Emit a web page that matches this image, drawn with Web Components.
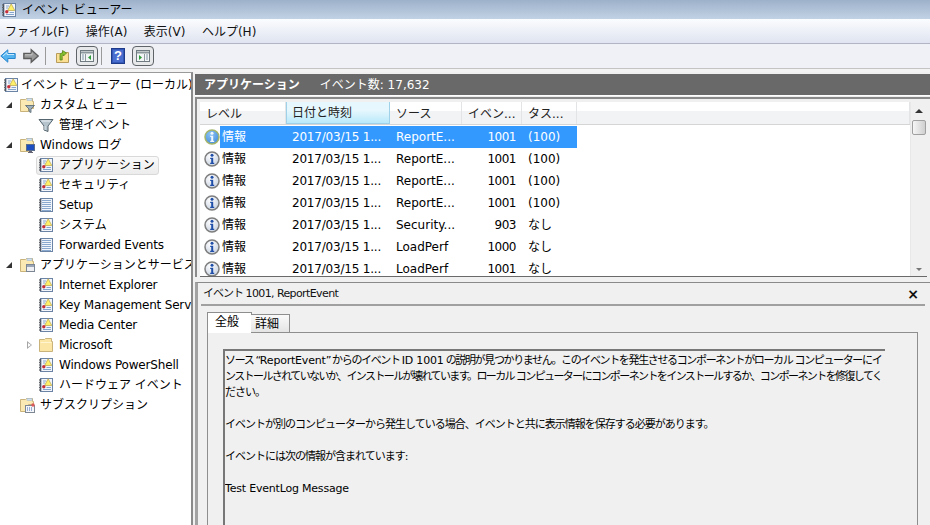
<!DOCTYPE html>
<html lang="ja">
<head>
<meta charset="utf-8">
<title>イベント ビューアー</title>
<style>
html, body { margin: 0; height: 100%; overflow: hidden; }
body { font: 12px/16px "DejaVu Sans", "Noto Sans CJK JP", sans-serif; color: #000; background: #f0f0f0; }
viewer-app { width: 930px; height: 525px; }
</style>
</head>
<body>
<viewer-app></viewer-app>
<script>
const BOOK = `<rect x="2.5" y="1.5" width="12" height="13" fill="#f2f6fb" stroke="#6b84a6"/><path d="M2.5 2v12" stroke="#3f4f66" stroke-width="1.6"/><path d="M1 3h2M1 5.5h2M1 8h2M1 10.5h2M1 13h2" stroke="#666"/>`
const TAB = `<rect x="8" y="1.5" width="5" height="2" fill="#cfe0f2" stroke="#9db4cc" stroke-width=".5"/>`
const ICONS = {
  log: `${BOOK}<path d="M5 4h3M5 6h2M5 12.5h8M8.5 10.5h4.5" stroke="#86a5cc"/><path d="M10.2 1.8l3.6 6.7H6.6z" fill="#fff06a" stroke="#b7a04a" stroke-width=".7"/><circle cx="5.8" cy="9.8" r="1.7" fill="#c62f3c"/>`,
  plain: `${BOOK}<path d="M4 3.5h9M4 5.5h9M4 7.5h9M4 9.5h9M4 11.5h9M4 13.5h9" stroke="#8aa9cf"/>`,
  folder: `<path d="M1.5 14.5v-12h5l1-1h6v3h1v10z" fill="#fbe6a6" stroke="#c9b37a"/><path d="M2.5 5.5h11" stroke="#fff5d0"/>`,
  folderFilter: `<path d="M1.5 14.5v-12h5l1-1h6v3h1v7h-5v3z" fill="#fbe9b4" stroke="#c9b37a"/>${TAB}<path d="M6.5 8.5h9l-3.5 3.5v3.5l-2-1v-2.5z" fill="#9fb0bd" stroke="#54646f" stroke-width=".8"/>`,
  folderWin: `<path d="M1.5 14.5v-12h5l1-1h6v3h1v3h-5v7z" fill="#fbe9b4" stroke="#c9b37a"/>${TAB}<rect x="7.5" y="7.5" width="8" height="6" fill="#1d4fc0" stroke="#5a6e8c"/><path d="M10 14.5h3M9 15.5h5" stroke="#667"/>`,
  folderApp: `<path d="M1.5 14.5v-12h5l1-1h6v3h1v3h-5v7z" fill="#fbe9b4" stroke="#c9b37a"/>${TAB}<rect x="7.5" y="7.5" width="8" height="7" fill="#eef0f3" stroke="#7d8794"/><path d="M8 9h7" stroke="#9aa6b5" stroke-width="2"/>`,
  folderSub: `<path d="M1.5 14.5v-12h5l1-1h6v3h1v3h-5v7z" fill="#fbe9b4" stroke="#c9b37a"/>${TAB}<rect x="6.5" y="8.5" width="9" height="7" fill="#f4f6fa" stroke="#7d8794"/><path d="M8 11h1M10 11h1M12 11h1M8 13h1M10 13h1M12 13h1" stroke="#3d66b0"/><circle cx="14" cy="8" r="1.7" fill="#dc5a5a"/>`,
  filter: `<path d="M1 2.5h14L10 9v5.5l-4-1.5V9z" fill="#b5c3cc" stroke="#55656f"/><path d="M3.5 4h9" stroke="#eef3f6"/><path d="M7 9v4" stroke="#dfe6ea"/>`,
  back: `<path d="M.8 8l7-6.2v3.7h7.4v5H7.8v3.7z" fill="#55b4f0" stroke="#2a86cc"/><path d="M3 8l4-3.5v2h7" stroke="#c8e9fc" fill="none"/>`,
  forward: `<path d="M15.2 8L8.2 1.8v3.7H.8v5h7.4v3.7z" fill="#9a9a9a" stroke="#5c5c5c" stroke-width="1.3"/><path d="M2 6.8h7v-2" stroke="#c9c9c9" fill="none"/>`,
  up: `<path d="M1.5 14.5v-9h5l1-1h6v10z" fill="#fbdf93" stroke="#b79c5c"/><path d="M5 12V7.5C5 5.5 6 5 7.5 5V2.500L11.5 5 8.5 8V6.800C7.5 6.800 7.200 7.500 7.200 8.500V12z" fill="#86c12f" stroke="#4d7a14" stroke-width=".7"/>`,
  help: `<rect x=".5" y=".5" width="13" height="15" fill="#3458b8" stroke="#1e3a8a"/><rect x="2" y="2" width="10" height="12" fill="#4a6ed0"/>`,
  paneLeft: `<rect x="1.5" y="2.5" width="13" height="11" fill="#f2f5f5" stroke="#6f7b80"/><path d="M2 4.5h12" stroke="#8c989d" stroke-width="2"/><path d="M6.5 6v7" stroke="#8c989d"/><path d="M3 7h2M3 9h2M3 11h2" stroke="#7f93a8"/><path d="M12 7v5l-3-2.5z" fill="#2e9b3a"/>`,
  paneRight: `<rect x="1.5" y="2.5" width="13" height="11" fill="#f2f5f5" stroke="#6f7b80"/><path d="M2 4.5h12" stroke="#8c989d" stroke-width="2"/><path d="M9.5 6v7" stroke="#8c989d"/><path d="M11 7h2M11 9h2M11 11h2" stroke="#7f93a8"/><path d="M4 7v5l3-2.5z" fill="#2e9b3a"/>`
}

class AppIcon extends HTMLElement {
  connectedCallback() {
    const size = this.getAttribute('size') || 16
    this.attachShadow({ mode: 'open' }).innerHTML = `
      <style>
        :host { display: block; width: ${size}px; height: ${size}px; flex: none; }
        svg { display: block; }
      </style>
      <svg width="${size}" height="${size}" viewBox="0 0 16 16">${ICONS[this.getAttribute('name')]}</svg>`
  }
}

class TitleBar extends HTMLElement {
  connectedCallback() {
    this.attachShadow({ mode: 'open' }).innerHTML = `
      <style>
        :host { display: flex; align-items: center; gap: 5px; height: 19px; padding-left: 1px;
          background: linear-gradient(#9db1ca, #c2d2e5); }
      </style>
      <app-icon name="log"></app-icon><span><slot></slot></span>`
  }
}

class MenuBar extends HTMLElement {
  connectedCallback() {
    this.attachShadow({ mode: 'open' }).innerHTML = `
      <style>
        :host { display: flex; align-items: center; gap: 16.5px; height: 25px; padding: 1px 0 0 5px; box-sizing: border-box;
          background: linear-gradient(#fbfcfe, #dfe4f0); border-bottom: 1px solid #b2b5c6; color: #111; }
      </style>
      <slot></slot>`
  }
}

class ToolBar extends HTMLElement {
  connectedCallback() {
    this.attachShadow({ mode: 'open' }).innerHTML = `
      <style>
        :host { display: flex; align-items: center; height: 24px; background: #f0f1f6; }
        .sep { width: 1px; height: 18px; background: #9a9a9a; }
        .btn { box-sizing: border-box; width: 22px; height: 20px; display: flex; align-items: center;
          justify-content: center; border: 1.5px solid #5f6468; border-radius: 4px; background: #e6e8ea; }
        .q { position: relative; width: 14px; height: 16px; }
        .q b { position: absolute; inset: 0; text-align: center; color: #fff; font: bold 13px/16px "Liberation Sans", sans-serif; }
      </style>
      <app-icon name="back" style="margin-left:0"></app-icon>
      <app-icon name="forward" style="margin-left:7px"></app-icon>
      <div class="sep" style="margin-left:6px"></div>
      <app-icon name="up" style="margin-left:9px"></app-icon>
      <div class="btn" style="margin-left:5px"><app-icon name="paneLeft"></app-icon></div>
      <div class="sep" style="margin-left:3px"></div>
      <div class="q" style="margin-left:9px"><app-icon name="help"></app-icon><b>?</b></div>
      <div class="btn" style="margin-left:7px"><app-icon name="paneRight"></app-icon></div>`
  }
}

class TreeItem extends HTMLElement {
  connectedCallback() {
    const level = +this.getAttribute('level') || 0
    const arrow = this.getAttribute('arrow')
    const sel = this.hasAttribute('selected')
    const left = [3, 19, 38][level]
    this.attachShadow({ mode: 'open' }).innerHTML = `
      <style>
        :host { display: flex; align-items: center; height: 20px; padding-left: ${left}px; position: relative; white-space: nowrap; }
        .label { margin-left: ${level === 0 ? 2 : 5}px; ${this.hasAttribute('latin') ? 'letter-spacing: -.18px;' : ''} }
        .sel { position: absolute; left: 36px; top: 1px; width: 121px; height: 17px; border: 1px solid #d9d9d9;
          border-radius: 3px; background: linear-gradient(#fafafa, #ececec); }
        app-icon, .label { position: relative; }
        .arrow { position: absolute; top: 7px; }
        .open { left: 6px; width: 0; height: 0; border-style: solid; border-width: 0 0 6px 6px; border-color: transparent transparent #333 transparent; }
        .closed { left: 27px; top: 6px; width: 0; height: 0; border-style: solid; border-width: 4px 0 4px 5px; border-color: transparent transparent transparent #a6a6a6; }
        .closed::after { content: ""; position: absolute; left: -4px; top: -2px; border-style: solid; border-width: 2px 0 2px 3px; border-color: transparent transparent transparent #fff; }
      </style>
      ${sel ? '<div class="sel"></div>' : ''}
      ${arrow ? `<div class="arrow ${arrow}"></div>` : ''}
      <app-icon name="${this.getAttribute('icon')}"></app-icon>
      <span class="label"><slot></slot></span>`
  }
}

class TreePane extends HTMLElement {
  connectedCallback() {
    this.attachShadow({ mode: 'open' }).innerHTML = `
      <style>
        :host { display: block; box-sizing: border-box; width: 193px; flex: none; background: #fff; overflow: hidden;
          border-top: 1px solid #9a9a9a; border-right: 2px solid #8a8a8a; padding-top: 2px; }
      </style>
      <slot></slot>`
  }
}

class EventRow extends HTMLElement {
  connectedCallback() {
    const sel = this.hasAttribute('selected')
    const a = n => this.getAttribute(n)
    const gid = sel ? 'gs' : 'gn'
    this.attachShadow({ mode: 'open' }).innerHTML = `
      <style>
        :host { display: grid; grid-template-columns: 86px 104px 72px 60px 55px; height: 22px; line-height: 22px;
          white-space: nowrap; position: relative; }
        .c { padding-left: 6px; }
        .date { letter-spacing: -.2px; }
        .id { text-align: right; padding-right: 6px; letter-spacing: -.5px; }
        .hl { position: absolute; left: 20px; top: 0; width: 357px; height: 22px; background: #3399ff; }
        .c, .id { position: relative; ${sel ? 'color: #fff;' : ''} }
        svg { position: absolute; left: 4px; top: 3px; }
      </style>
      ${sel ? '<div class="hl"></div>' : ''}
      <div class="c" style="padding-left:22px">
        <svg width="16" height="16" viewBox="0 0 16 16">
          <defs><radialGradient id="${gid}" cx=".4" cy=".3" r=".8">
            <stop offset="0" stop-color="${sel ? '#8cc4f4' : '#ffffff'}"/><stop offset="1" stop-color="${sel ? '#3f88da' : '#c3cede'}"/>
          </radialGradient></defs>
          <circle cx="8" cy="8" r="7" fill="url(#${gid})" stroke="${sel ? '#a3b56a' : '#7e7e7e'}" stroke-width="1.5"/>
          <circle cx="8" cy="4.3" r="1.5" fill="${sel ? '#f0f7ff' : '#1f4ea8'}"/>
          <path d="M6.2 6.8h3v5h1V13H6.2v-1.2h1V8H6.2z" fill="${sel ? '#f0f7ff' : '#1f4ea8'}"/>
        </svg>情報</div>
      <div class="c date">${a('date')}</div>
      <div class="c">${a('source')}</div>
      <div class="id">${a('eid')}</div>
      <div class="c">${a('task')}</div>`
  }
}

class EventTable extends HTMLElement {
  connectedCallback() {
    this.attachShadow({ mode: 'open' }).innerHTML = `
      <style>
        :host { display: flex; height: 174px; margin: 3px 3px 0 3px; background: #fff; overflow: hidden;
          border-bottom: 1px solid #6a6a6a; }
        .list { flex: 1; min-width: 0; overflow: hidden; }
        .head { display: grid; grid-template-columns: 86px 104px 72px 60px 55px 1fr; height: 23px; margin-bottom: 1px;
          background: linear-gradient(#fff 0 40%, #f2f3f5 40% 100%); border-bottom: 1px solid #d5d5d5; box-sizing: border-box; }
        .head div { padding-left: 6px; line-height: 24px; color: #222; border-right: 1px solid #e3e4e6; white-space: nowrap; overflow: hidden; }
        .head .sort { background: linear-gradient(#e6f7fd 0 40%, #b9e9fa 100%); border: 1px solid #9fd2e8; border-top: 0; box-sizing: border-box; line-height: 23px; padding-left: 5px; }
        .scroll { width: 16px; flex: none; background: #f0f0f0; position: relative; display: flex; flex-direction: column; align-items: center; border-left: 1px solid #e8e8e8; }
        .up { margin-top: 7px; border-style: solid; border-width: 0 4px 4px; border-color: transparent transparent #333; }
        .thumb { box-sizing: border-box; width: 14px; height: 15px; margin-top: 7px; border: 1px solid #a0a0a0; border-radius: 2px;
          background: linear-gradient(90deg, #f6f6f6, #cfcfcf); }
        .down { margin-top: auto; margin-bottom: 5px; border-style: solid; border-width: 3px 3px 0; border-color: #777 transparent transparent; }
      </style>
      <div class="list">
        <div class="head">
          <div>レベル</div><div class="sort">日付と時刻</div><div>ソース</div><div>イベン...</div><div>タス...</div><div></div>
        </div>
        <slot></slot>
      </div>
      <div class="scroll"><div class="up"></div><div class="thumb"></div><div class="down"></div></div>`
  }
}

class DetailPane extends HTMLElement {
  connectedCallback() {
    this.attachShadow({ mode: 'open' }).innerHTML = `
      <style>
        :host { display: block; flex: 1; min-height: 0; margin: 5px 0 0 0; background: #f0f0f0; border-top: 1px solid #8a8a8a;
          border-left: 3px solid #a2a2a2; overflow: hidden; }
        .top { display: flex; justify-content: space-between; align-items: center; height: 21px; margin-left: 5px; width: 721px; color: #111;
          font-size: 11px; letter-spacing: -1px; }
        .x { font: bold 14px/16px "DejaVu Sans", sans-serif; margin-right: 5px; letter-spacing: 0; }
        .rule { height: 2px; margin-left: 3px; width: 724px; background: #a0a0a0; }
        .tabs { display: flex; align-items: flex-end; margin: 6px 0 0 9px; height: 20px; position: relative; z-index: 1; }
        .tab { box-sizing: border-box; border: 1px solid #8e8e8e; border-bottom: 0; }
        .on { width: 45px; height: 21px; background: #fff; line-height: 18px; margin-bottom: -1px; padding-left: 7px; }
        .off { width: 39px; height: 18px; margin-left: -1px; border-left: 0; background: linear-gradient(#fafafa, #e4e4e4); line-height: 18px; padding-left: 4px; }
        .panel { margin-left: 9px; width: 711px; box-sizing: border-box; height: 240px; border: 1px solid #8e8e8e; border-bottom: 0; padding: 16px 32px 0 15px; }
        .msg { height: 200px; border-top: 2px solid #777; border-left: 2px solid #777; padding: 2px 0 0 0; white-space: nowrap; overflow: hidden;
          line-height: 16px; font-size: 11px; letter-spacing: -1px; }
      </style>
      <div class="top"><span><slot name="title"></slot></span><span class="x">×</span></div>
      <div class="rule"></div>
      <div class="tabs"><div class="tab on">全般</div><div class="tab off">詳細</div></div>
      <div class="panel"><div class="msg"><slot></slot></div></div>`
  }
}

class ViewerApp extends HTMLElement {
  connectedCallback() {
    const rows = [
      ['ReportE...', '1001', '(100)'], ['ReportE...', '1001', '(100)'], ['ReportE...', '1001', '(100)'],
      ['ReportE...', '1001', '(100)'], ['Security...', '903', 'なし'], ['LoadPerf', '1000', 'なし'], ['LoadPerf', '1001', 'なし']
    ].map((r, i) => `<event-row ${i === 0 ? 'selected' : ''} date="2017/03/15 1..." source="${r[0]}" eid="${r[1]}" task="${r[2]}"></event-row>`).join('')

    this.attachShadow({ mode: 'open' }).innerHTML = `
      <style>
        :host { display: flex; flex-direction: column; overflow: hidden; background: #f0f0f0; }
        .spacer { height: 4px; flex: none; background: #f3f3f3; border-top: 1px solid #c4c4c4; box-sizing: border-box; }
        .main { flex: 1; min-height: 0; display: flex; }
        .right { flex: 1; min-width: 0; display: flex; flex-direction: column; margin-left: 2px; }
        .band { height: 21px; margin-top: 2px; flex: none; background: #696969; color: #fff; display: flex; align-items: center; gap: 20px; padding-left: 9px; border-bottom: 1px solid #fff; }
        .upper { flex: none; background: #f0f0f0; border-top: 2px solid #8a8a8a; border-left: 2px solid #8a8a8a; margin-top: 1px; display: flex; flex-direction: column; }
        .lat { letter-spacing: -.2px; }
        .l1 { letter-spacing: -1.36px; }
        .l2 { letter-spacing: -1.6px; }
      </style>
      <title-bar>イベント ビューアー</title-bar>
      <menu-bar><span>ファイル(F)</span><span>操作(A)</span><span>表示(V)</span><span>ヘルプ(H)</span></menu-bar>
      <tool-bar></tool-bar>
      <div class="spacer"></div>
      <div class="main">
        <tree-pane>
          <tree-item level="0" icon="log">イベント ビューアー (ローカル)</tree-item>
          <tree-item level="1" icon="folderFilter" arrow="open">カスタム ビュー</tree-item>
          <tree-item level="2" icon="filter">管理イベント</tree-item>
          <tree-item level="1" icon="folderWin" arrow="open">Windows ログ</tree-item>
          <tree-item level="2" icon="log" selected>アプリケーション</tree-item>
          <tree-item level="2" icon="log">セキュリティ</tree-item>
          <tree-item level="2" icon="plain" latin>Setup</tree-item>
          <tree-item level="2" icon="log">システム</tree-item>
          <tree-item level="2" icon="plain" latin>Forwarded Events</tree-item>
          <tree-item level="1" icon="folderApp" arrow="open">アプリケーションとサービス ログ</tree-item>
          <tree-item level="2" icon="log" latin>Internet Explorer</tree-item>
          <tree-item level="2" icon="log" latin>Key Management Service</tree-item>
          <tree-item level="2" icon="log" latin>Media Center</tree-item>
          <tree-item level="2" icon="folder" arrow="closed" latin>Microsoft</tree-item>
          <tree-item level="2" icon="log" latin>Windows PowerShell</tree-item>
          <tree-item level="2" icon="log">ハードウェア イベント</tree-item>
          <tree-item level="1" icon="folderSub">サブスクリプション</tree-item>
        </tree-pane>
        <div class="right">
          <div class="band"><b>アプリケーション</b><span>イベント数: 17,632</span></div>
          <div class="upper"><event-table>${rows}</event-table></div>
          <detail-pane>
            <span slot="title">イベント <span style="letter-spacing:-.6px">1001, ReportEvent</span></span>
            <span class="l1">ソース “<span class="lat">ReportEvent</span>” からのイベント <span class="lat">ID 1001</span> の説明が見つかりません。このイベントを発生させるコンポーネントがローカル コンピューターにイ</span><br>
            <span class="l2">ンストールされていないか、インストールが壊れています。ローカル コンピューターにコンポーネントをインストールするか、コンポーネントを修復してく</span><br>
            ださい。<br><br>
            イベントが別のコンピューターから発生している場合、イベントと共に表示情報を保存する必要があります。<br><br>
            イベントには次の情報が含まれています:<br><br>
            <span class="lat">Test EventLog Message</span>
          </detail-pane>
        </div>
      </div>`
  }
}

customElements.define('app-icon', AppIcon)
customElements.define('title-bar', TitleBar)
customElements.define('menu-bar', MenuBar)
customElements.define('tool-bar', ToolBar)
customElements.define('tree-item', TreeItem)
customElements.define('tree-pane', TreePane)
customElements.define('event-row', EventRow)
customElements.define('event-table', EventTable)
customElements.define('detail-pane', DetailPane)
customElements.define('viewer-app', ViewerApp)
</script>
</body>
</html>
